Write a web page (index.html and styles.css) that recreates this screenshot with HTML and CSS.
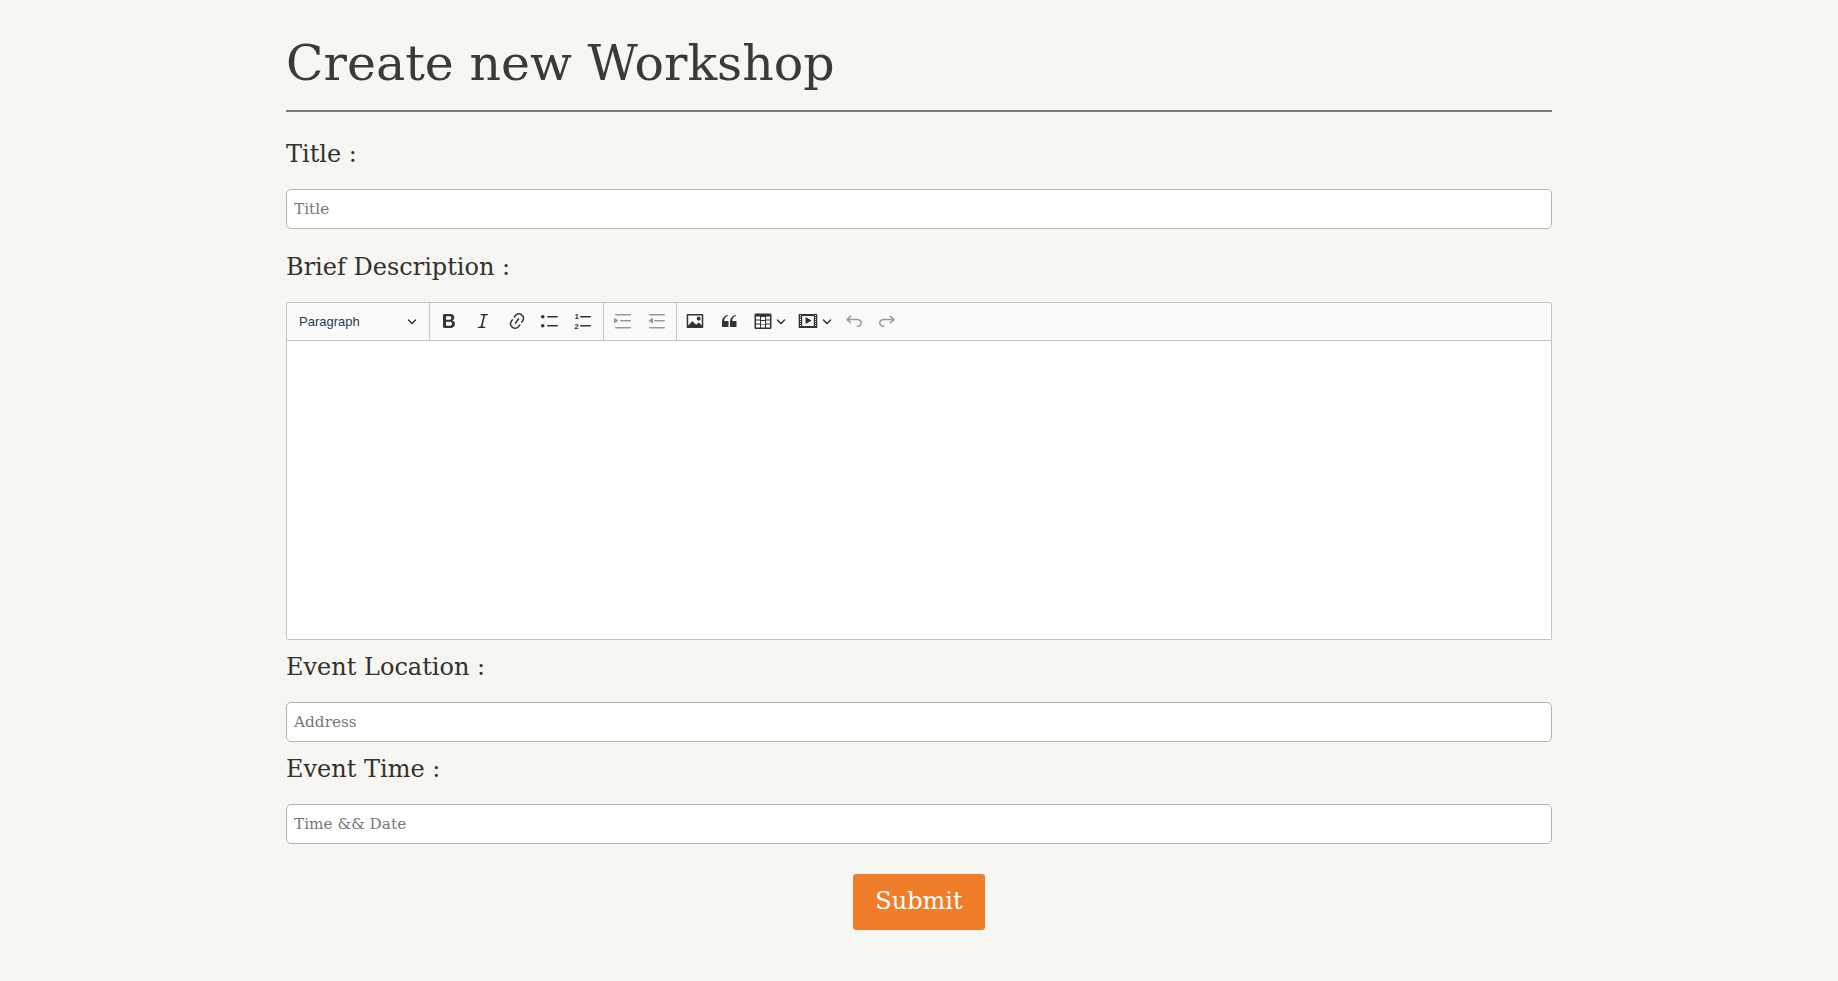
FILE: index.html
```html
<!DOCTYPE html>
<html lang="en">
<head>
<meta charset="utf-8">
<title>Create new Workshop</title>
<link rel="stylesheet" href="styles.css">
</head>
<body>
<main class="page">
  <h1 class="heading">Create new Workshop</h1>
  <form class="form">
    <div class="group group-first">
      <label class="label">Title :</label>
      <input class="field" type="text" placeholder="Title">
    </div>
    <div class="group">
      <label class="label">Brief Description :</label>
      <div class="editor">
        <div class="toolbar">
          <div class="tool-section para">
            <span class="para-text">Paragraph</span>
            <svg class="arrow" viewBox="0 0 10 10"><path d="M.941 4.523a.75.75 0 1 1 1.06-1.06l3.006 3.005 3.005-3.005a.75.75 0 1 1 1.06 1.06l-3.549 3.55a.75.75 0 0 1-1.168-.136L.941 4.523z"/></svg>
          </div>
          <div class="tool-section s1">
            <svg class="icon" viewBox="0 0 20 20"><path d="M10.187 17H5.773c-.637 0-1.092-.138-1.364-.415-.273-.277-.409-.718-.409-1.323V4.738c0-.617.14-1.062.419-1.332.279-.27.73-.406 1.354-.406h4.68c.69 0 1.288.041 1.793.124.506.083.96.242 1.36.478.341.197.644.447.906.75a3.262 3.262 0 0 1 .808 2.162c0 1.401-.722 2.426-2.167 3.075C15.05 10.175 16 11.315 16 13.01a3.756 3.756 0 0 1-2.296 3.504 6.1 6.1 0 0 1-1.517.377c-.571.073-1.238.11-2 .11zm-.217-6.217H7v4.087h3.069c1.977 0 2.965-.69 2.965-2.072 0-.707-.256-1.22-.768-1.537-.512-.319-1.277-.478-2.296-.478zM7 5.13v3.619h2.606c.729 0 1.292-.067 1.69-.2a1.6 1.6 0 0 0 .91-.765c.165-.267.247-.566.247-.897 0-.707-.26-1.176-.778-1.409-.519-.232-1.31-.348-2.375-.348H7z"/></svg>
            <svg class="icon" viewBox="0 0 20 20"><path d="m9.586 14.633.021.004c-.036.335.095.655.393.962.082.083.173.15.274.201h1.474a.6.6 0 1 1 0 1.2H5.304a.6.6 0 0 1 0-1.2h1.15c.474-.07.809-.182 1.005-.334.157-.122.291-.32.404-.597l2.416-9.55a1.053 1.053 0 0 0-.281-.823 1.12 1.12 0 0 0-.442-.296H8.15a.6.6 0 0 1 0-1.2h6.443a.6.6 0 1 1 0 1.2h-1.195c-.376.056-.65.155-.823.296-.215.175-.423.439-.623.79l-2.366 9.347z"/></svg>
            <svg class="icon" viewBox="0 0 20 20"><path d="m11.077 15 .991-1.416a.75.75 0 1 1 1.229.86l-1.148 1.64a.748.748 0 0 1-.217.206 5.251 5.251 0 0 1-8.503-5.955.741.741 0 0 1 .12-.274l1.147-1.639a.75.75 0 1 1 1.228.86L4.933 10.7l.006.003a3.75 3.75 0 0 0 6.132 4.294l.006.004zm5.494-5.335a.748.748 0 0 1-.12.274l-1.147 1.639a.75.75 0 1 1-1.228-.86l.86-1.23a3.75 3.75 0 0 0-6.144-4.301l-.86 1.229a.75.75 0 0 1-1.229-.86l1.148-1.64a.748.748 0 0 1 .217-.206 5.251 5.251 0 0 1 8.503 5.955zm-4.563-2.532a.75.75 0 0 1 .184 1.045l-3.155 4.505a.75.75 0 1 1-1.229-.86l3.155-4.506a.75.75 0 0 1 1.045-.184z"/></svg>
            <svg class="icon" viewBox="0 0 20 20"><path d="M7 5.75c0 .414.336.75.75.75h9.5a.75.75 0 1 0 0-1.5h-9.5a.75.75 0 0 0-.75.75zm-6 0C1 4.784 1.777 4 2.75 4c.966 0 1.75.777 1.75 1.75 0 .966-.777 1.75-1.75 1.75C1.784 7.5 1 6.723 1 5.75zm6 9c0 .414.336.75.75.75h9.5a.75.75 0 1 0 0-1.5h-9.5a.75.75 0 0 0-.75.75zm-6 0c0-.966.777-1.75 1.75-1.75.966 0 1.75.777 1.75 1.75 0 .966-.777 1.75-1.75 1.75-.966 0-1.75-.777-1.75-1.75z"/></svg>
            <svg class="icon nudge" viewBox="0 0 20 20"><path d="M7 5.75c0 .414.336.75.75.75h9.5a.75.75 0 1 0 0-1.5h-9.5a.75.75 0 0 0-.75.75zm0 9c0 .414.336.75.75.75h9.5a.75.75 0 1 0 0-1.5h-9.5a.75.75 0 0 0-.75.75z"/><text class="num" x="1.6" y="7.8">1</text><text class="num" x="1.2" y="18">2</text></svg>
          </div>
          <div class="tool-section s2">
            <svg class="icon dim" viewBox="0 0 20 20"><path d="M2 3.75c0-.414.336-.75.75-.75h14.5a.75.75 0 1 1 0 1.5H2.75A.75.75 0 0 1 2 3.75zm5 6c0-.414.336-.75.75-.75h9.5a.75.75 0 1 1 0 1.5h-9.5A.75.75 0 0 1 7 9.75zM2.75 16a.75.75 0 1 0 0 1.5h14.5a.75.75 0 1 0 0-1.5H2.75zM1.632 6.95 5.02 9.358a.4.4 0 0 1-.013.661l-3.39 2.207A.4.4 0 0 1 1 11.892V7.275a.4.4 0 0 1 .632-.326z"/></svg>
            <svg class="icon dim" viewBox="0 0 20 20"><path d="M2 3.75c0-.414.336-.75.75-.75h14.5a.75.75 0 1 1 0 1.5H2.75A.75.75 0 0 1 2 3.75zm5 6c0-.414.336-.75.75-.75h9.5a.75.75 0 1 1 0 1.5h-9.5A.75.75 0 0 1 7 9.75zM2.75 16a.75.75 0 1 0 0 1.5h14.5a.75.75 0 1 0 0-1.5H2.75zM5.37 6.95 1.98 9.358a.4.4 0 0 0 .013.661l3.39 2.207A.4.4 0 0 0 6 11.892V7.275a.4.4 0 0 0-.63-.325z"/></svg>
          </div>
          <div class="tool-section s3">
            <svg class="icon wide" viewBox="0 0 20 20"><path d="M6.91 10.54c.26-.23.64-.21.88.03l3.36 3.14 2.23-2.06a.64.64 0 0 1 .87 0l2.52 2.97V4.5H3.2v10.12l3.71-4.08zm10.27-7.51c.6 0 1.09.47 1.09 1.05v11.84c0 .59-.49 1.06-1.09 1.06H2.79c-.6 0-1.09-.47-1.09-1.06V4.08c0-.58.49-1.05 1.1-1.05h14.38zm-5.22 5.56a1.96 1.96 0 1 1 3.4-1.96 1.96 1.96 0 0 1-3.4 1.96z"/></svg>
            <svg class="icon wide" viewBox="0 0 20 20"><path d="M3 10.423a6.5 6.5 0 0 1 6.056-6.408l.038.67C6.448 5.423 5.354 7.663 5.22 10H9c.552 0 .5.432.5.986v4.511c0 .554-.448.503-1 .503h-5c-.552 0-.5-.449-.5-1.003v-4.574zm8 0a6.5 6.5 0 0 1 6.056-6.408l.038.67c-2.646.739-3.74 2.979-3.873 5.315H17c.552 0 .5.432.5.986v4.511c0 .554-.448.503-1 .503h-5c-.552 0-.5-.449-.5-1.003v-4.574z"/></svg>
            <span class="split">
              <svg class="icon" viewBox="0 0 20 20"><path d="M3 5.5v3h4v-3H3zm0 4v3h4v-3H3zm0 4v3h4v-3H3zm5 3h4v-3H8v3zm5 0h4v-3h-4v3zm4-4v-3h-4v3h4zm0-4v-3h-4v3h4zm1.5 8a1.5 1.5 0 0 1-1.5 1.5H3A1.5 1.5 0 0 1 1.5 16V4c0-.828.67-1.5 1.5-1.5h14c.83 0 1.5.672 1.5 1.5v12zm-10.5-3.5h4v-3H8v3zm0-4h4v-3H8v3z"/></svg>
              <svg class="arrow" viewBox="0 0 10 10"><path d="M.941 4.523a.75.75 0 1 1 1.06-1.06l3.006 3.005 3.005-3.005a.75.75 0 1 1 1.06 1.06l-3.549 3.55a.75.75 0 0 1-1.168-.136L.941 4.523z"/></svg>
            </span>
            <span class="split split-media">
              <svg class="icon" viewBox="0 0 20 20"><path fill-rule="evenodd" d="M18.68 3.03c.6 0 .59-.03.59.55v12.84c0 .59.01.56-.59.56H1.29c-.6 0-.59.03-.59-.56V3.58c0-.58-.01-.55.6-.55h17.38zM15.77 15V5H4.2v10h11.57zM2 4v1h1V4H2zm0 2v1h1V6H2zm0 2v1h1V8H2zm0 2v1h1v-1H2zm0 2v1h1v-1H2zm0 2v1h1v-1H2zM17 4v1h1V4h-1zm0 2v1h1V6h-1zm0 2v1h1V8h-1zm0 2v1h1v-1h-1zm0 2v1h1v-1h-1zm0 2v1h1v-1h-1zM7.5 6.677a.4.4 0 0 1 .593-.351l5.133 2.824a.4.4 0 0 1 0 .7l-5.133 2.824a.4.4 0 0 1-.593-.35V6.676z"/></svg>
              <svg class="arrow" viewBox="0 0 10 10"><path d="M.941 4.523a.75.75 0 1 1 1.06-1.06l3.006 3.005 3.005-3.005a.75.75 0 1 1 1.06 1.06l-3.549 3.55a.75.75 0 0 1-1.168-.136L.941 4.523z"/></svg>
            </span>
            <svg class="icon dim undo" viewBox="0 0 20 20"><path d="m5.042 9.367 2.189 1.837a.75.75 0 0 1-.965 1.149l-3.788-3.18a.747.747 0 0 1-.21-.284.75.75 0 0 1 .17-.945L6.23 4.762a.75.75 0 1 1 .964 1.15L4.863 7.866h8.917A.75.75 0 0 1 14 7.9a4 4 0 1 1-1.477 7.718l.344-1.489a2.5 2.5 0 1 0 1.094-4.73l.008-.032H5.042z"/></svg>
            <svg class="icon dim" viewBox="0 0 20 20"><path d="m14.958 9.367-2.189 1.837a.75.75 0 0 0 .965 1.149l3.788-3.18a.747.747 0 0 0 .21-.284.75.75 0 0 0-.17-.945L13.77 4.762a.75.75 0 1 0-.964 1.15l2.331 1.955H6.22A.75.75 0 0 0 6 7.9a4 4 0 1 0 1.477 7.718l-.344-1.489A2.5 2.5 0 1 1 6.039 9.4l-.008-.032h8.927z"/></svg>
          </div>
        </div>
        <div class="editable"></div>
      </div>
    </div>
    <div class="group">
      <label class="label">Event Location :</label>
      <input class="field" type="text" placeholder="Address">
    </div>
    <div class="group">
      <label class="label">Event Time :</label>
      <input class="field" type="text" placeholder="Time &amp;&amp; Date">
    </div>
    <div class="actions">
      <button class="submit" type="button">Submit</button>
    </div>
  </form>
</main>
</body>
</html>
```
FILE: styles.css
```css
* { box-sizing: border-box; }
html, body { margin: 0; padding: 0; }
body {
  background: #f6f6f2;
  color: #3c3a32;
  font-family: "DejaVu Serif", "Liberation Serif", serif;
  height: 981px;
  overflow: hidden;
}
.page { width: 1266px; margin: 0 auto; }
.heading {
  margin: 0;
  height: 112px;
  padding-top: 35px;
  border-bottom: 2px solid #7f7f7a;
  font-size: 49px;
  line-height: 58px;
  font-weight: 400;
  color: #3c3a32;
}
.form { display: flex; flex-direction: column; padding-top: 15px; }
.group { display: flex; flex-direction: column; padding-top: 12px; }
.group-first { padding-bottom: 11px; }
.label {
  height: 30px;
  line-height: 31px;
  margin-bottom: 20px;
  font-size: 24px;
  color: #33312b;
}
.field {
  display: block;
  width: 100%;
  height: 40px;
  padding: 0 7px;
  border: 1px solid #b5b5b5;
  border-radius: 5px;
  background: #fff;
  font-family: inherit;
  font-size: 15.3px;
  color: #33312b;
  outline: none;
}
.field::placeholder { color: #777; opacity: 1; }
.editor { display: flex; flex-direction: column; height: 338px; }
.toolbar {
  display: flex;
  height: 39px;
  flex: none;
  background: #fafafa;
  border: 1px solid #c4c4c4;
  border-radius: 2px 2px 0 0;
}
.tool-section {
  display: flex;
  align-items: center;
  height: 100%;
  padding-bottom: 2px;
  border-right: 1px solid #c4c4c4;
}
.tool-section:last-child { border-right: 0; }
.para { width: 143px; padding: 0 12px; justify-content: space-between; }
.para-text {
  font-family: "Liberation Sans", Arial, sans-serif;
  font-size: 13px;
  color: #1f3b53;
}
.para .arrow { margin-bottom: 2px; }
.arrow { width: 10px; height: 10px; fill: #333; flex: none; }
.s1 { width: 174px; padding-left: 9px; gap: 13.75px; }
.s2 { width: 73px; padding-left: 9px; gap: 14px; }
.s3 { padding-left: 8px; gap: 12px; }
.icon { width: 20px; height: 20px; fill: #333; flex: none; }
.icon.dim { fill: #9a9a9a; }
.icon.wide { margin-right: 2px; }
.icon.undo { margin-right: 1px; }
.icon.nudge { margin-left: -1px; }
.num { font-family: "Liberation Sans", Arial, sans-serif; font-size: 8px; font-weight: 700; fill: #333; }
.split { display: flex; align-items: center; gap: 3px; }
.split-media { gap: 4px; }
.editable {
  flex: 1;
  background: #fff;
  border: 1px solid #c4c4c4;
  border-top: 0;
  border-radius: 0 0 2px 2px;
}
.actions { display: flex; justify-content: center; padding-top: 30px; }
.submit {
  width: 132px;
  height: 56px;
  border: 0;
  border-radius: 3px;
  background: #f07d2a;
  color: #fff;
  font-family: inherit;
  font-size: 24px;
  padding: 0 0 2px;
}
```
